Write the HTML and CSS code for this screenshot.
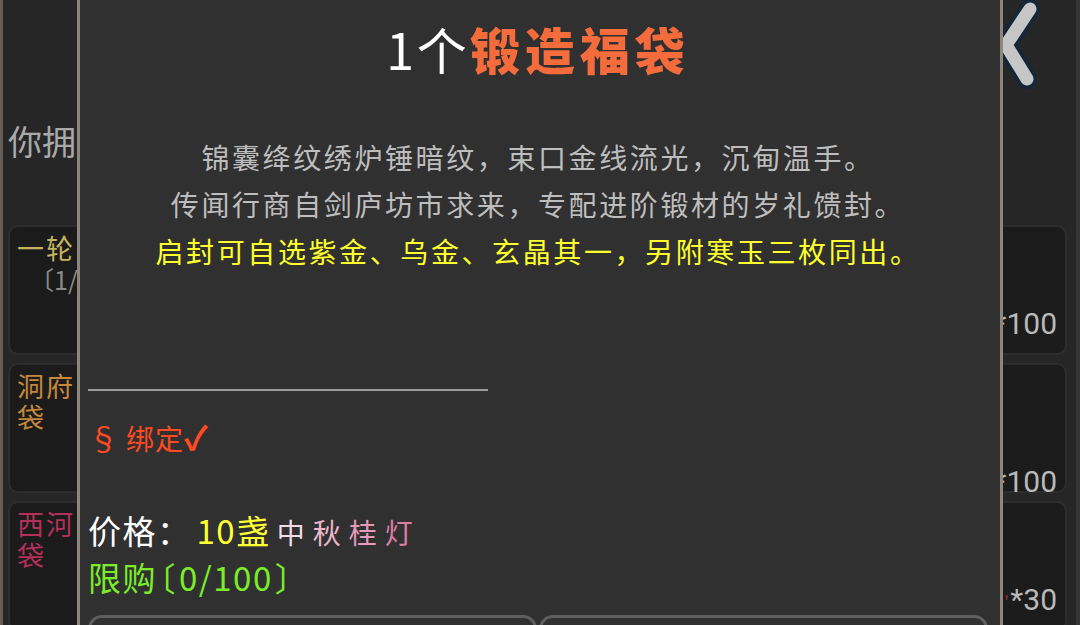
FILE: index.html
```html
<!DOCTYPE html>
<html lang="zh">
<head>
<meta charset="utf-8">
<title>锻造福袋</title>
<link rel="stylesheet" href="styles.css">
</head>
<body>
<div class="page">
  <header class="topbar">
    <svg class="back" width="60" height="92" viewBox="0 0 60 92" aria-label="返回">
      <polyline points="46,9 22,45 43,79" fill="none" stroke="#13263a" stroke-width="20" stroke-linecap="round" stroke-linejoin="round"/>
      <polyline points="46,9 22,45 43,79" fill="none" stroke="#c6c6c6" stroke-width="13" stroke-linecap="round" stroke-linejoin="round"/>
    </svg>
  </header>
  <div class="owned">你拥有的物品</div>
  <div class="cards">
    <div class="card">
      <div class="name">
        <div class="name-gold">一轮</div>
        <div class="name-sub">〔1/1〕</div>
      </div>
      <div class="qty">*100</div>
    </div>
    <div class="card">
      <div class="name name-orange">洞府袋</div>
      <span class="tag"></span>
      <div class="qty qty-low">*100</div>
    </div>
    <div class="card">
      <div class="name name-red">西河袋</div>
      <span class="tag tag-low"></span>
      <div class="qty"><span class="tick">'</span>*30</div>
    </div>
  </div>
</div>

<section class="modal">
  <h1 class="title"><span class="t-count">1个</span><span class="t-name">锻造福袋</span></h1>
  <div class="desc">
    <div>锦囊绛纹绣炉锤暗纹，束口金线流光，沉甸温手。</div>
    <div>传闻行商自剑庐坊市求来，专配进阶锻材的岁礼馈封。</div>
    <div class="desc-hl">启封可自选紫金、乌金、玄晶其一，另附寒玉三枚同出。</div>
  </div>
  <div class="rule"></div>
  <div class="bind"><span class="sect">§</span>绑定<span class="check">✓</span></div>
  <div class="price"><span class="p-label">价格：</span><span class="p-num">10盏</span><span class="p-cur"><span class="c1">中</span><span class="c2">秋</span><span class="c3">桂</span><span class="c4">灯</span></span></div>
  <div class="limit">限购<span class="halt">〔</span>0/100<span class="halt">〕</span></div>
  <div class="buttons">
    <div class="btn"></div>
    <div class="btn"></div>
  </div>
</section>
</body>
</html>
```

FILE: styles.css
```css
* { box-sizing: border-box; }

html, body {
  margin: 0;
  padding: 0;
}

body {
  width: 1080px;
  height: 625px;
  overflow: hidden;
  position: relative;
  background: #262626;
  font-family: "Noto Sans CJK SC", "Noto Sans", sans-serif;
}

.page {
  height: 625px;
  overflow: hidden;
  border-left: 3px solid #635f58;
  border-right: 4px solid #353535;
  background: #262626;
}

.topbar {
  height: 100px;
  display: flex;
  justify-content: flex-end;
  align-items: flex-start;
}

.back {
  display: block;
  margin-right: 32px;
}

.owned {
  margin-top: 21px;
  padding-left: 5px;
  font-size: 34px;
  line-height: 40px;
  color: #a9a9a9;
  white-space: nowrap;
}

.cards {
  margin-top: 64px;
  padding: 0 9px 0 5px;
  display: flex;
  flex-direction: column;
  gap: 8px;
}

.card {
  height: 130px;
  flex-shrink: 0;
  display: flex;
  align-items: flex-start;
  background: #1b1b1b;
  border: 2px solid #2d2d2d;
  border-radius: 10px;
  padding: 5px 8px 0 7px;
}

.name {
  width: 60px;
  overflow: hidden;
  font-size: 27px;
  line-height: 31px;
  letter-spacing: 2px;
}

.name-gold {
  color: #c5b45e;
  white-space: nowrap;
}

.name-sub {
  color: #8a8a8a;
  font-size: 25px;
  line-height: 33px;
  letter-spacing: 0;
  padding-left: 12px;
  white-space: nowrap;
}

.name-orange { color: #c4883c; }
.name-red { color: #b3305a; }

.tag {
  display: block;
  width: 20px;
  height: 24px;
  margin-top: 35px;
  background: #5f8f3a;
  border-radius: 3px;
}

.tag-low { margin-top: 36px; }

.qty {
  margin-left: auto;
  margin-top: 77px;
  font-family: Roboto, "Noto Sans", sans-serif;
  font-size: 30px;
  line-height: 30px;
  color: #b9b9b9;
}

.qty-low { margin-top: 97px; }

.tick {
  color: #a02a2a;
  font-size: 20px;
  margin-right: 2px;
}

/* modal */
.modal {
  position: absolute;
  left: 77px;
  top: 0;
  width: 926px;
  height: 625px;
  overflow: hidden;
  background: #303030;
  border-left: 3px solid #8b877e;
  border-right: 3px solid #8b877e;
  padding: 0 12px 0 8px;
}

.title {
  margin: 18px 0 0;
  text-align: center;
  font-size: 50px;
  line-height: 60px;
  letter-spacing: 3px;
  font-weight: 400;
}

.t-count { color: #ffffff; }

.t-name {
  color: #f46c3c;
  font-weight: 900;
  letter-spacing: 5px;
}

.desc {
  margin-top: 56px;
  text-align: center;
  font-size: 28px;
  line-height: 47px;
  letter-spacing: 2.6px;
  color: #bdbdbd;
}

.desc-hl { color: #ffff2e; }

.rule {
  margin-top: 114px;
  width: 400px;
  height: 2px;
  background: #9a9a9a;
}

.bind {
  margin-top: 25px;
  font-size: 28px;
  line-height: 40px;
  letter-spacing: 1px;
  color: #ff4a22;
  white-space: nowrap;
}

.sect {
  font-size: 31px;
  margin-right: 6px;
}

.check {
  font-size: 33px;
  font-weight: 700;
}

.price {
  margin-top: 49px;
  font-size: 33px;
  line-height: 46px;
  letter-spacing: 1.5px;
  white-space: nowrap;
}

.p-label { color: #ffffff; }

.p-num {
  color: #ffff33;
  margin-left: 5px;
}

.p-cur {
  font-size: 28px;
  letter-spacing: 8px;
  margin-left: 6px;
}

.c1 { color: #f3dce6; }
.c2 { color: #eab8cc; }
.c3 { color: #e49ab8; }
.c4 { color: #dc7ea4; }

.limit {
  font-size: 33px;
  line-height: 44px;
  letter-spacing: 1.5px;
  color: #7aec28;
  white-space: nowrap;
}

.halt {
  font-feature-settings: "halt" 1;
  margin: 0 2px;
}

.buttons {
  margin-top: 16px;
  display: grid;
  grid-template-columns: 1fr 1fr;
  gap: 2px;
}

.btn {
  height: 60px;
  border: 3px solid #5e5e5e;
  border-radius: 14px;
  background: #303030;
}
```
